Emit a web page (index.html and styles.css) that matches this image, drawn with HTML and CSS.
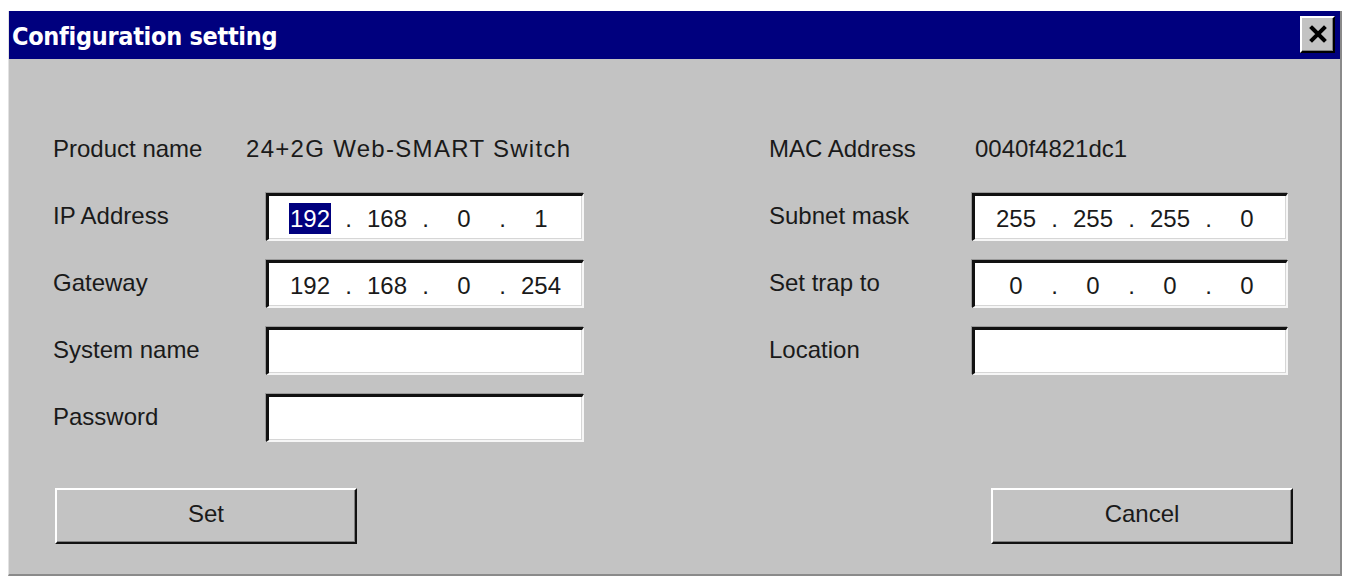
FILE: index.html
```html
<!DOCTYPE html>
<html>
<head>
<meta charset="utf-8">
<title>Configuration setting</title>
<link rel="stylesheet" href="styles.css">
</head>
<body>
<div class="window">
  <div class="titlebar">
    <span class="title">Configuration setting</span>
    <button class="close" aria-label="Close">
      <svg width="20" height="20" viewBox="0 0 20 20"><path d="M4 4 L16 16 M16 4 L4 16" stroke="#000" stroke-width="4" stroke-linecap="square"/></svg>
    </button>
  </div>
  <div class="content">
    <div class="form">
      <div class="label">Product name</div>
      <div class="value shift">24+2G Web-SMART Switch</div>
      <div></div>
      <div class="label">MAC Address</div>
      <div class="value mac">0040f4821dc1</div>

      <div class="label">IP Address</div>
      <div class="field ip">
        <span class="seg"><span class="sel">192</span></span><span class="dot">.</span><span class="seg">168</span><span class="dot">.</span><span class="seg">0</span><span class="dot">.</span><span class="seg">1</span>
      </div>
      <div></div>
      <div class="label">Subnet mask</div>
      <div class="field ip">
        <span class="seg">255</span><span class="dot">.</span><span class="seg">255</span><span class="dot">.</span><span class="seg">255</span><span class="dot">.</span><span class="seg">0</span>
      </div>

      <div class="label">Gateway</div>
      <div class="field ip">
        <span class="seg">192</span><span class="dot">.</span><span class="seg">168</span><span class="dot">.</span><span class="seg">0</span><span class="dot">.</span><span class="seg">254</span>
      </div>
      <div></div>
      <div class="label">Set trap to</div>
      <div class="field ip">
        <span class="seg">0</span><span class="dot">.</span><span class="seg">0</span><span class="dot">.</span><span class="seg">0</span><span class="dot">.</span><span class="seg">0</span>
      </div>

      <div class="label">System name</div>
      <div class="field"></div>
      <div></div>
      <div class="label">Location</div>
      <div class="field"></div>

      <div class="label">Password</div>
      <div class="field"></div>
      <div></div>
      <div></div>
      <div></div>
    </div>
    <div class="buttons">
      <button class="btn">Set</button>
      <button class="btn">Cancel</button>
    </div>
  </div>
</div>
</body>
</html>
```
FILE: styles.css
```css
html, body {
  margin: 0;
  padding: 0;
  background: #ffffff;
}

.window {
  box-sizing: border-box;
  margin: 11px 0 0 8px;
  width: 1334px;
  height: 565px;
  background: #c3c3c3;
  border-left: 1px solid #e2e2e2;
  border-right: 2px solid #8a8a8a;
  border-bottom: 2px solid #8a8a8a;
  font-family: "Liberation Sans", Arial, sans-serif;
  color: #1a1a1a;
}

.titlebar {
  height: 48px;
  background: #00007e;
  display: flex;
  align-items: center;
  justify-content: space-between;
  padding: 0 5px 0 3px;
}

.title {
  font-family: "DejaVu Sans Condensed", "DejaVu Sans", sans-serif;
  font-weight: bold;
  font-size: 25px;
  color: #ffffff;
  letter-spacing: -0.3px;
  padding-top: 3px;
}

.close {
  box-sizing: border-box;
  width: 35px;
  height: 37px;
  padding: 0;
  margin-top: -2px;
  background: #c3c3c3;
  border-top: 2px solid #ffffff;
  border-left: 2px solid #ffffff;
  border-right: 2px solid #000000;
  border-bottom: 2px solid #000000;
  box-shadow: inset -1px -1px 0 #808080;
  display: flex;
  align-items: center;
  justify-content: center;
}

.content {
  padding: 67px 0 0 44px;
}

.form {
  display: grid;
  grid-template-columns: 213px 318px 185px 203px 316px;
  grid-auto-rows: 48px;
  row-gap: 19px;
}

.label, .value {
  font-size: 24px;
  align-self: center;
  white-space: nowrap;
  margin-top: -2px;
}

.shift {
  margin-left: -20px;
  letter-spacing: 1.3px;
}

.mac {
  margin-left: 3px;
}

.field {
  box-sizing: border-box;
  background: #ffffff;
  border-top: 3px solid #111111;
  border-left: 3px solid #111111;
  border-right: 2px solid #f6f6f6;
  border-bottom: 2px solid #f6f6f6;
  box-shadow: inset -1px -1px 0 #d6d6d6, -1px -1px 0 #9a9a9a;
}

.ip {
  display: flex;
  align-items: center;
  padding: 2px 0 0 11px;
  font-size: 24px;
}

.seg {
  width: 60px;
  text-align: center;
}

.dot {
  width: 17px;
  text-align: center;
}

.sel {
  background: #00007e;
  color: #ffffff;
  padding: 2px 1px;
}

.buttons {
  display: flex;
  justify-content: space-between;
  margin-top: 46px;
  padding: 0 47px 0 2px;
}

.btn {
  box-sizing: border-box;
  width: 302px;
  height: 56px;
  background: #c3c3c3;
  border-top: 2px solid #ffffff;
  border-left: 2px solid #ffffff;
  border-right: 2px solid #111111;
  border-bottom: 2px solid #111111;
  box-shadow: inset -1px -1px 0 #808080;
  font-family: "Liberation Sans", Arial, sans-serif;
  font-size: 24px;
  color: #1a1a1a;
  padding: 0 0 4px 0;
}
```
